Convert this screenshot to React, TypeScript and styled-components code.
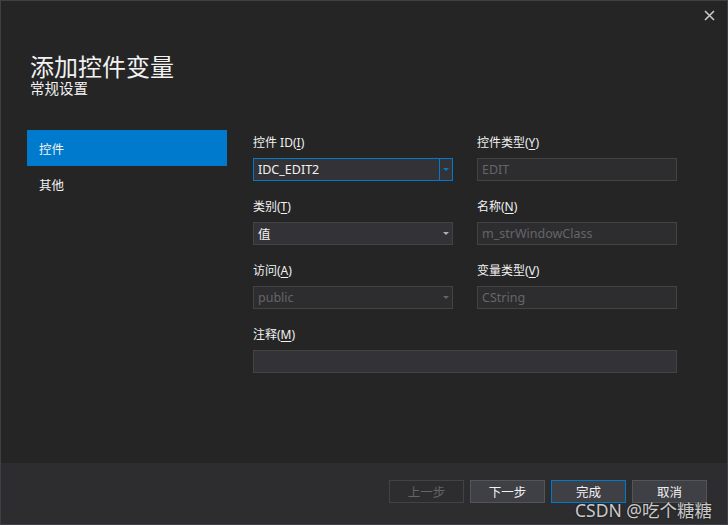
import React from "react";
import styled, { createGlobalStyle, css } from "styled-components";

const GlobalStyle = createGlobalStyle`
  html, body {
    margin: 0;
    padding: 0;
    background: #252526;
  }
  * {
    box-sizing: border-box;
  }
`;

const Dialog = styled.div`
  position: relative;
  width: 728px;
  height: 525px;
  display: flex;
  flex-direction: column;
  background: #252526;
  border: 1px solid #3f3f46;
  font-family: "Noto Sans", "Noto Sans CJK SC", sans-serif;
  color: #f1f1f1;
  overflow: hidden;
`;

const TopBar = styled.div`
  height: 28px;
  display: flex;
  justify-content: flex-end;
  align-items: center;
  padding-right: 10px;
`;

const CloseButton = styled.button`
  width: 16px;
  height: 16px;
  padding: 0;
  border: none;
  background: none;
  display: flex;
  align-items: center;
  justify-content: center;
  color: #c8c8c8;
  cursor: pointer;
`;

const Header = styled.div`
  padding: 24px 0 0 29px;
`;

const Title = styled.h1`
  margin: 0;
  font-family: "Noto Sans CJK SC", sans-serif;
  font-size: 24px;
  line-height: 26px;
  font-weight: 400;
  color: #f1f1f1;
`;

const Subtitle = styled.div`
  font-family: "Noto Sans CJK SC", sans-serif;
  font-size: 14.5px;
  line-height: 18px;
  color: #f1f1f1;
`;

const Body = styled.div`
  display: flex;
  margin-top: 33px;
  padding-left: 26px;
`;

const Nav = styled.div`
  width: 200px;
  display: flex;
  flex-direction: column;
`;

const NavItem = styled.div<{ $active?: boolean }>`
  height: 36px;
  display: flex;
  align-items: center;
  padding-left: 12px;
  font-family: "Noto Sans CJK SC", sans-serif;
  font-size: 12.5px;
  color: #f1f1f1;
  background: ${(p) => (p.$active ? "#007acc" : "transparent")};
`;

const Form = styled.div`
  display: grid;
  grid-template-columns: 200px 200px;
  column-gap: 24px;
  row-gap: 16px;
  margin-left: 26px;
  padding-top: 3px;
`;

const Field = styled.div<{ $wide?: boolean }>`
  display: flex;
  flex-direction: column;
  gap: 5px;
  ${(p) =>
    p.$wide &&
    css`
      grid-column: 1 / span 2;
    `}
`;

const Label = styled.label`
  height: 20px;
  line-height: 20px;
  font-family: "Noto Sans", "Noto Sans CJK SC", sans-serif;
  font-size: 12px;
  color: #f1f1f1;
  u {
    text-underline-offset: 2px;
  }
`;

const Box = styled.div<{ $disabled?: boolean; $focused?: boolean }>`
  height: 23px;
  display: flex;
  align-items: center;
  background: ${(p) => (p.$disabled ? "#2d2d30" : "#333337")};
  border: 1px solid ${(p) => (p.$focused ? "#007acc" : "#434346")};
  color: ${(p) => (p.$disabled ? "#656565" : "#f1f1f1")};
  font-family: "Noto Sans", "Noto Sans CJK SC", sans-serif;
  font-size: 12.5px;
`;

const BoxText = styled.span`
  flex: 1;
  padding-left: 4px;
  white-space: nowrap;
  overflow: hidden;
`;

const Arrow = styled.span<{ $focused?: boolean; $color: string }>`
  width: 13px;
  height: 100%;
  display: flex;
  align-items: center;
  justify-content: center;
  border-left: 1px solid ${(p) => (p.$focused ? "#007acc" : "transparent")};
  &::after {
    content: "";
    border-left: 3px solid transparent;
    border-right: 3px solid transparent;
    border-top: 3px solid ${(p) => p.$color};
  }
`;

const Footer = styled.div`
  margin-top: auto;
  height: 61px;
  background: #2d2d30;
  display: flex;
  justify-content: flex-end;
  align-items: flex-start;
  gap: 6px;
  padding: 17px 20px 0 0;
`;

const Button = styled.button<{ $primary?: boolean }>`
  width: 75px;
  height: 23px;
  padding: 0;
  font-family: "Noto Sans CJK SC", sans-serif;
  font-size: 12.5px;
  color: #f1f1f1;
  background: #3f3f46;
  border: 1px solid ${(p) => (p.$primary ? "#007acc" : "#555555")};
  &:disabled {
    background: transparent;
    border-color: #434346;
    color: #656565;
  }
`;

const Watermark = styled.div`
  position: absolute;
  right: 15px;
  bottom: 2px;
  font-family: "Noto Sans", "Noto Sans CJK SC", sans-serif;
  font-size: 17.5px;
  color: rgba(235, 235, 235, 0.85);
  text-shadow: 0 0 2px rgba(0, 0, 0, 0.6);
  pointer-events: none;
`;

type Combo = { value: string; disabled?: boolean; focused?: boolean };

const ComboBox = ({ value, disabled, focused }: Combo) => (
  <Box $disabled={disabled} $focused={focused}>
    <BoxText>{value}</BoxText>
    <Arrow
      $focused={focused}
      $color={focused ? "#007acc" : disabled ? "#656565" : "#b0b0b0"}
    />
  </Box>
);

const TextBox = ({ value }: { value: string }) => (
  <Box $disabled>
    <BoxText>{value}</BoxText>
  </Box>
);

export default function App() {
  return (
    <>
      <GlobalStyle />
      <Dialog>
        <TopBar>
          <CloseButton aria-label="close">
            <svg width="11" height="11" viewBox="0 0 11 11">
              <path
                d="M1 1 L10 10 M10 1 L1 10"
                stroke="currentColor"
                strokeWidth="1.6"
              />
            </svg>
          </CloseButton>
        </TopBar>
        <Header>
          <Title>添加控件变量</Title>
          <Subtitle>常规设置</Subtitle>
        </Header>
        <Body>
          <Nav>
            <NavItem $active>控件</NavItem>
            <NavItem>其他</NavItem>
          </Nav>
          <Form>
            <Field>
              <Label>
                控件 ID(<u>I</u>)
              </Label>
              <ComboBox value="IDC_EDIT2" focused />
            </Field>
            <Field>
              <Label>
                控件类型(<u>Y</u>)
              </Label>
              <TextBox value="EDIT" />
            </Field>
            <Field>
              <Label>
                类别(<u>T</u>)
              </Label>
              <ComboBox value="值" />
            </Field>
            <Field>
              <Label>
                名称(<u>N</u>)
              </Label>
              <TextBox value="m_strWindowClass" />
            </Field>
            <Field>
              <Label>
                访问(<u>A</u>)
              </Label>
              <ComboBox value="public" disabled />
            </Field>
            <Field>
              <Label>
                变量类型(<u>V</u>)
              </Label>
              <TextBox value="CString" />
            </Field>
            <Field $wide>
              <Label>
                注释(<u>M</u>)
              </Label>
              <Box>
                <BoxText />
              </Box>
            </Field>
          </Form>
        </Body>
        <Footer>
          <Button disabled>上一步</Button>
          <Button>下一步</Button>
          <Button $primary>完成</Button>
          <Button>取消</Button>
        </Footer>
        <Watermark>CSDN @吃个糖糖</Watermark>
      </Dialog>
    </>
  );
}
